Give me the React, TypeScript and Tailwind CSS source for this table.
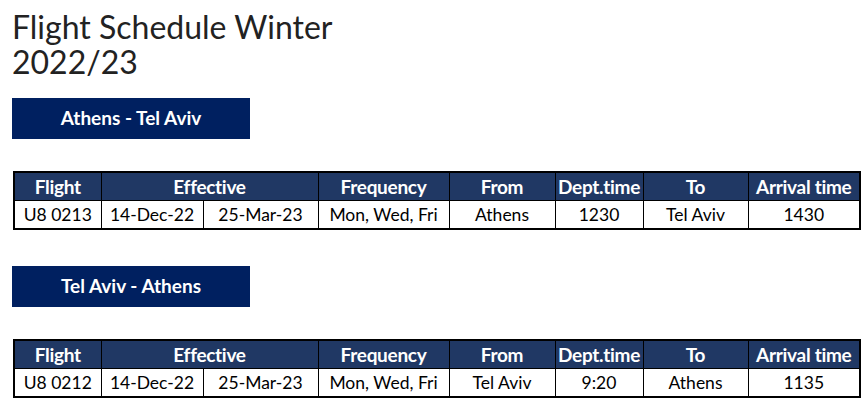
import React from 'react';

interface Flight {
  route: string;
  flight: string;
  from: string;
  to: string;
  validFrom: string;
  validTo: string;
  frequency: string;
  dept: string;
  arrival: string;
}

const flights: Flight[] = [
  {
    route: 'Athens - Tel Aviv',
    flight: 'U8 0213',
    validFrom: '14-Dec-22',
    validTo: '25-Mar-23',
    frequency: 'Mon, Wed, Fri',
    from: 'Athens',
    dept: '1230',
    to: 'Tel Aviv',
    arrival: '1430',
  },
  {
    route: 'Tel Aviv - Athens',
    flight: 'U8 0212',
    validFrom: '14-Dec-22',
    validTo: '25-Mar-23',
    frequency: 'Mon, Wed, Fri',
    from: 'Tel Aviv',
    dept: '9:20',
    to: 'Athens',
    arrival: '1135',
  },
];

const th = 'border border-black bg-[#203864] text-white font-bold text-[19px] h-[28px] p-0 text-center leading-none tracking-[-0.3px] whitespace-nowrap';
const td = 'border border-black text-[17.5px] h-[29px] p-0 text-center leading-none text-black whitespace-nowrap';

const ScheduleTable: React.FC<{ f: Flight }> = ({ f }) => (
  <table className="table-fixed border-collapse border-2 border-black w-[846px] ml-px">
    <colgroup>
      <col className="w-[87px]" />
      <col className="w-[102px]" />
      <col className="w-[115px]" />
      <col className="w-[131px]" />
      <col className="w-[106px]" />
      <col className="w-[88px]" />
      <col className="w-[105px]" />
      <col className="w-[112px]" />
    </colgroup>
    <thead>
      <tr>
        <th className={th}>Flight</th>
        <th className={th} colSpan={2}>Effective</th>
        <th className={th}>Frequency</th>
        <th className={th}>From</th>
        <th className={th}>Dept.time</th>
        <th className={th}>To</th>
        <th className={th}>Arrival time</th>
      </tr>
    </thead>
    <tbody>
      <tr>
        <td className={td}>{f.flight}</td>
        <td className={td}>{f.validFrom}</td>
        <td className={td}>{f.validTo}</td>
        <td className={td}>{f.frequency}</td>
        <td className={td}>{f.from}</td>
        <td className={td}>{f.dept}</td>
        <td className={td}>{f.to}</td>
        <td className={td}>{f.arrival}</td>
      </tr>
    </tbody>
  </table>
);

export default function App() {
  return (
    <div className="w-[868px] h-[416px] bg-white pl-[12px] pt-[9px] font-['Lato','Liberation_Sans',sans-serif] overflow-hidden">
      <h1 className="text-[32px] leading-[35px] font-normal text-[#222]">
        Flight Schedule Winter
        <br />
        2022/23
      </h1>

      {flights.map((f, i) => (
        <div key={f.flight} className={i === 0 ? 'mt-[19px]' : 'mt-[36px]'}>
          <div className="w-[238px] h-[41px] bg-[#002060] flex items-center justify-center text-white font-bold text-[19px]">
            {f.route}
          </div>
          <div className="mt-[32px]">
            <ScheduleTable f={f} />
          </div>
        </div>
      ))}
    </div>
  );
}
